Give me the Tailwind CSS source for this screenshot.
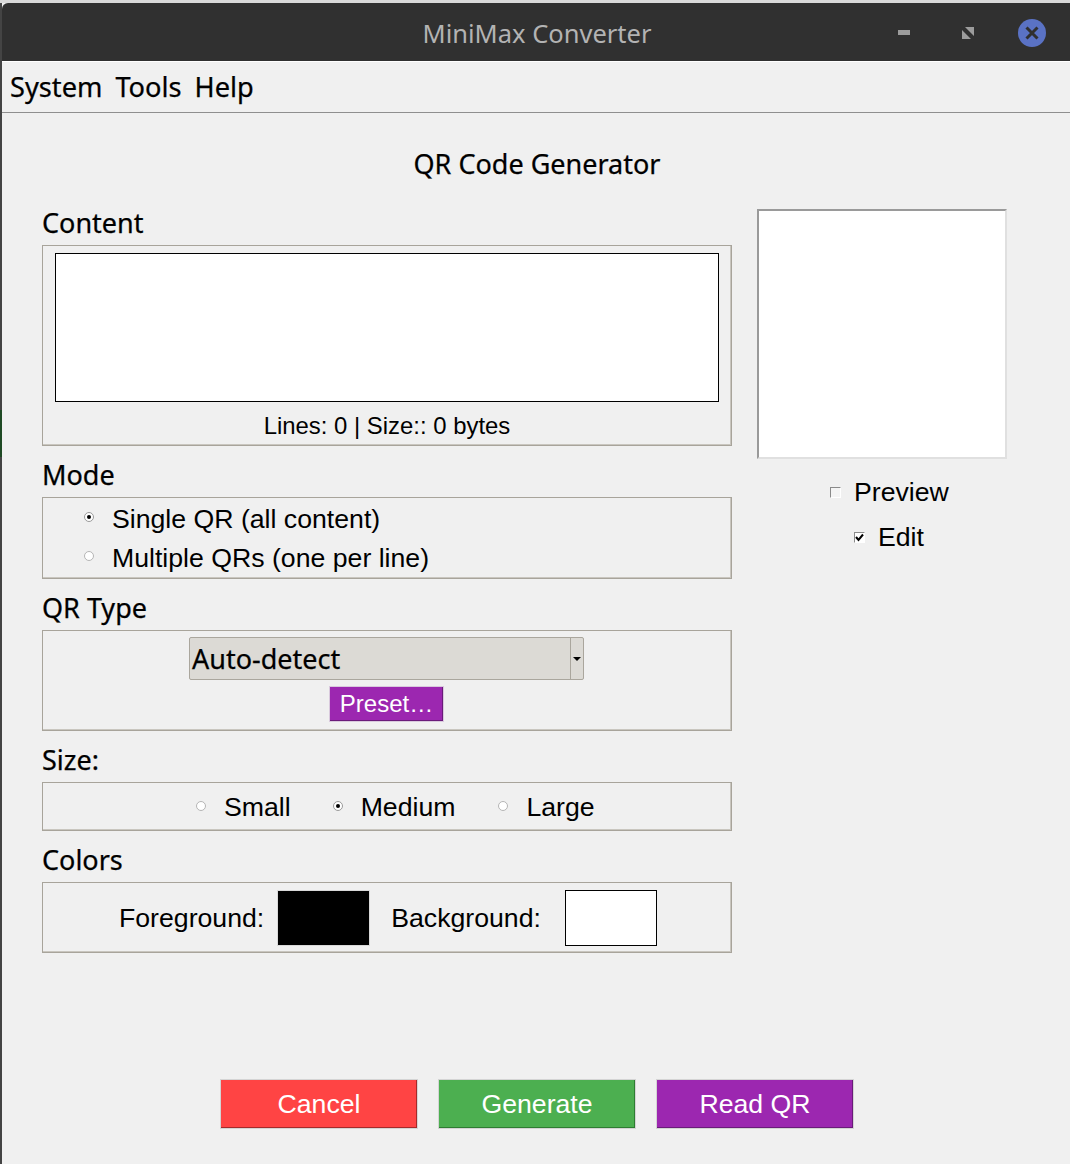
<!DOCTYPE html>
<html>
<head>
  <meta charset="utf-8">
  <meta name="viewport" content="width=device-width, initial-scale=1">
  <title>MiniMax Converter</title>
  <script src="https://cdn.jsdelivr.net/npm/@tailwindcss/browser@4"></script>
</head>
<body class="w-[1070px] h-[1164px] overflow-hidden bg-[#f0f0f0] font-['Liberation_Sans',sans-serif] text-[26.67px] text-black">
  <div class="h-[3px] bg-[#d9d9d9]"></div>
  <div class="flex h-[1161px]">
    <div class="w-[2px] bg-[#444444]">
      <div class="mt-[407px] h-[47px] bg-[#1f4a25]"></div>
    </div>
    <div class="flex-1 flex flex-col min-w-0">
      <!-- title bar -->
      <div class="relative h-[58px] flex items-center justify-center bg-[#303030] rounded-tl-md font-['Noto_Sans',sans-serif] text-[25.5px] text-[#b3b3b3]">
        <span class="ml-[2px] mt-[3px]">MiniMax Converter</span>
        <div class="absolute left-[896px] top-[27px] w-[12px] h-[5px] bg-[#9c9c9c]"></div>
        <svg class="absolute left-[960px] top-[24px]" width="12" height="12" viewBox="0 0 12 12">
          <path d="M3 0 L12 0 L12 9 Z M0 3 L0 12 L9 12 Z" fill="#9c9c9c"/>
        </svg>
        <svg class="absolute left-[1016px] top-[16px]" width="28" height="28" viewBox="0 0 28 28">
          <circle cx="14" cy="14" r="14" fill="#5a72c4"/>
          <path d="M8.5 8.5 L19.5 19.5 M19.5 8.5 L8.5 19.5" stroke="#303030" stroke-width="3"/>
        </svg>
      </div>
      <div class="h-px bg-white"></div>
      <!-- menu -->
      <div class="h-[50px] flex items-center gap-[13px] pl-2 font-['Noto_Sans',sans-serif] text-[27.2px] [-webkit-text-stroke:0.25px_black] border-b border-[#8f8f8f] box-content">
        <span>System</span><span>Tools</span><span>Help</span>
      </div>
      <!-- form -->
      <div class="flex-1 flex flex-col">
        <div class="h-[84px] pt-[32px] text-center font-['Noto_Sans',sans-serif] text-[27px] [-webkit-text-stroke:0.25px_black] leading-[37px] pl-[2px]">QR Code Generator</div>
        <div class="flex pl-[40px] gap-[25px]">
          <div class="w-[690px]">
            <div class="h-[48px] pt-[7px] font-['Noto_Sans',sans-serif] text-[27px] [-webkit-text-stroke:0.25px_black] leading-[37px]">Content</div>
            <div class="h-[201px] border border-[#a8a49b] shadow-[inset_-1px_-1px_0_#c9c6bf] pt-[7px] px-[12px]">
              <div class="h-[149px] bg-white border border-black"></div>
              <div class="text-center leading-[29px] mt-[9px] text-[23.9px]">Lines: 0 | Size:: 0 bytes</div>
            </div>

            <div class="h-[51px] pt-[10px] font-['Noto_Sans',sans-serif] text-[27px] [-webkit-text-stroke:0.25px_black] leading-[37px]">Mode</div>
            <div class="h-[82px] border border-[#a8a49b] shadow-[inset_-1px_-1px_0_#c9c6bf] pt-[6px] pl-[41px]">
              <div class="flex items-center h-[29px]">
                <span class="mb-[3px] w-[10px] h-[10px] rounded-full bg-white border border-[#9a9a9a] flex items-center justify-center"><span class="w-[4px] h-[4px] rounded-full bg-black"></span></span>
                <span class="ml-[18px]">Single QR (all content)</span>
              </div>
              <div class="flex items-center h-[29px] mt-[10px]">
                <span class="mb-[3px] w-[10px] h-[10px] rounded-full bg-white border border-[#b5b5b5]"></span>
                <span class="ml-[18px]">Multiple QRs (one per line)</span>
              </div>
            </div>

            <div class="h-[51px] pt-[10px] font-['Noto_Sans',sans-serif] text-[27px] [-webkit-text-stroke:0.25px_black] leading-[37px]">QR Type</div>
            <div class="h-[101px] border border-[#a8a49b] shadow-[inset_-1px_-1px_0_#c9c6bf] pt-[6px] flex flex-col items-center">
              <div class="w-[395px] h-[43px] -ml-[1px] flex bg-[#dcdad5] border border-[#aaa69d] rounded-[2px] font-['Noto_Sans',sans-serif] text-[27px] [-webkit-text-stroke:0.25px_black]">
                <div class="flex-1 flex items-center pl-[2px] pt-[2px] border-r border-[#aaa69d]">Auto-detect</div>
                <div class="w-[12px] flex items-center justify-center">
                  <span class="w-0 h-0 border-x-[4px] border-x-transparent border-t-[4px] border-t-black"></span>
                </div>
              </div>
              <button class="mt-[6px] -ml-[1px] w-[115px] h-[36px] bg-[#9c27b0] border border-[#d9c9dd] shadow-[inset_-1px_-1px_0_#6a1b7a] text-white text-[24px] leading-none">Preset…</button>
            </div>

            <div class="h-[51px] pt-[10px] font-['Noto_Sans',sans-serif] text-[27px] [-webkit-text-stroke:0.25px_black] leading-[37px]">Size:</div>
            <div class="h-[49px] border border-[#a8a49b] shadow-[inset_-1px_-1px_0_#c9c6bf] flex items-center pl-[153px]">
              <span class="mb-[2px] w-[10px] h-[10px] rounded-full bg-white border border-[#b5b5b5]"></span>
              <span class="ml-[18px]">Small</span>
              <span class="mb-[2px] ml-[42px] w-[10px] h-[10px] rounded-full bg-white border border-[#9a9a9a] flex items-center justify-center"><span class="w-[4px] h-[4px] rounded-full bg-black"></span></span>
              <span class="ml-[18px]">Medium</span>
              <span class="mb-[2px] ml-[43px] w-[10px] h-[10px] rounded-full bg-white border border-[#b5b5b5]"></span>
              <span class="ml-[18px]">Large</span>
            </div>

            <div class="h-[51px] pt-[10px] font-['Noto_Sans',sans-serif] text-[27px] [-webkit-text-stroke:0.25px_black] leading-[37px]">Colors</div>
            <div class="h-[71px] border border-[#a8a49b] shadow-[inset_-1px_-1px_0_#c9c6bf] flex items-center pl-[76px]">
              <span>Foreground:</span>
              <span class="ml-[13px] w-[93px] h-[56px] bg-black border border-[#d9d9d9]"></span>
              <span class="ml-[21px]">Background:</span>
              <span class="ml-[24px] w-[92px] h-[56px] bg-white border border-black"></span>
            </div>
          </div>

          <!-- preview column -->
          <div class="w-[250px] pt-[12px]">
            <div class="h-[250px] bg-white border-2 border-[#e0e0e0] border-t-[#9a9a9a] border-l-[#9a9a9a]"></div>
            <div class="mt-[18px] h-[30px] flex items-center pl-[73px]">
              <span class="w-[11px] h-[11px] bg-[#f4f4f4] border border-[#8a8a8a] border-r-white border-b-white"></span>
              <span class="ml-[13px]">Preview</span>
            </div>
            <div class="mt-[15px] h-[30px] flex items-center pl-[97px]">
              <span class="w-[11px] h-[11px] bg-white border border-[#8a8a8a] border-r-white border-b-white flex items-center justify-center">
                <svg width="9" height="9" viewBox="0 0 9 9"><path d="M1 4 L3.5 7 L8 1.5" fill="none" stroke="black" stroke-width="2"/></svg>
              </span>
              <span class="ml-[13px]">Edit</span>
            </div>
          </div>
        </div>

        <!-- actions -->
        <div class="flex gap-[20px] pl-[218px] mt-[126px] text-white">
          <button class="w-[198px] h-[50px] bg-[#ff4444] border border-[#d4d4d4] shadow-[inset_-1px_-1px_0_#a52a2a]">Cancel</button>
          <button class="w-[198px] h-[50px] bg-[#4caf50] border border-[#d4d4d4] shadow-[inset_-1px_-1px_0_#2e7d32]">Generate</button>
          <button class="w-[198px] h-[50px] bg-[#9c27b0] border border-[#d4d4d4] shadow-[inset_-1px_-1px_0_#6a1b7a]">Read QR</button>
        </div>
      </div>
    </div>
  </div>
</body>
</html>
